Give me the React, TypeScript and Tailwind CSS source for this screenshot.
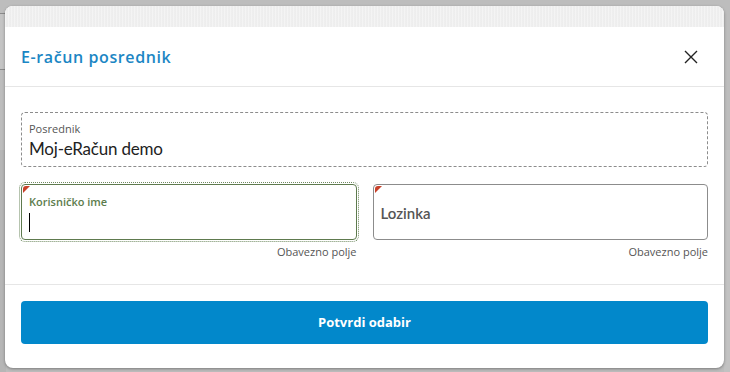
import React from "react";

function Corner() {
  return (
    <span className="absolute left-[1px] top-[1px] h-0 w-0 border-l-[7px] border-b-[7px] border-l-[#c8412a] border-b-transparent rounded-tl-[3px]" />
  );
}

export default function App() {
  return (
    <div className="relative h-[372px] w-[730px] overflow-hidden bg-[#bdbdbd] font-['Open_Sans',sans-serif]">
      {/* underlying page hints */}
      <div className="absolute left-0 top-[13px] h-[57px] w-[6px] border-y border-[#8a8a8a] bg-[#c4c4c4]" />
      <div className="absolute left-0 top-[150px] h-[222px] w-[6px] bg-[#b6b6b6]" />
      <div className="absolute right-0 top-[150px] h-[222px] w-[6px] bg-[#c2c2c2]" />

      <div className="relative ml-[5px] mt-[6px] flex h-[362px] w-[719px] flex-col overflow-hidden rounded-[8px] bg-white shadow-[0_1px_3px_rgba(0,0,0,0.35)]">
        <div className="h-[21px] bg-[#efefef] bg-[repeating-linear-gradient(90deg,#f4f4f4_0px,#f4f4f4_1px,#e9e9e9_2px,#f2f2f2_3px)]" />
        <div className="flex h-[60px] items-center justify-between border-b border-[#e6e6e6] pl-[16px] pr-[26px]">
          <span className="text-[16px] font-semibold tracking-[0.6px] text-[#1b86c4]">E-račun posrednik</span>
          <svg width="14" height="14" viewBox="0 0 14 14" className="text-[#222]">
            <path d="M1 1L13 13M13 1L1 13" stroke="currentColor" strokeWidth="1.4" />
          </svg>
        </div>

        <div className="flex flex-col px-[16px] pt-[25px]">
          <div className="flex h-[55px] flex-col rounded-[4px] border border-dashed border-[#8c8c8c] px-[7px] pt-[9px]">
            <span className="text-[11px] leading-[13px] text-[#555]">Posrednik</span>
            <span className="mt-[3px] font-['Lato',sans-serif] text-[17px] leading-[22px] tracking-[-0.2px] text-[#222]">Moj-eRačun demo</span>
          </div>

          <div className="mt-[17px] grid grid-cols-2 gap-[16px]">
            <div className="flex flex-col">
              <div className="relative flex h-[56px] flex-col rounded-[4px] border border-[#5e7a4e] px-[7px] pt-[10px] outline-1 outline-dotted outline-offset-[1px] outline-[#6f8a60]">
                <Corner />
                <span className="text-[11px] font-semibold leading-[13px] text-[#5c7c4c]">Korisničko ime</span>
                <span className="mt-[5px] h-[19px] w-[1px] bg-black" />
              </div>
              <span className="mt-[5px] self-end text-[11px] leading-[14px] text-[#555]">Obavezno polje</span>
            </div>
            <div className="flex flex-col">
              <div className="relative flex h-[56px] items-center rounded-[4px] border border-[#8c8c8c] px-[7px]">
                <Corner />
                <span className="pt-[2px] font-['Lato',sans-serif] text-[15px] font-semibold text-[#555]">Lozinka</span>
              </div>
              <span className="mt-[5px] self-end text-[11px] leading-[14px] text-[#555]">Obavezno polje</span>
            </div>
          </div>
        </div>

        <div className="mt-[25px] border-t border-[#e6e6e6] px-[16px] pt-[16px]">
          <button className="flex h-[43px] w-full items-center justify-center rounded-[4px] bg-[#0288cb] text-[13px] font-bold text-white">
            Potvrdi odabir
          </button>
        </div>
      </div>
    </div>
  );
}
